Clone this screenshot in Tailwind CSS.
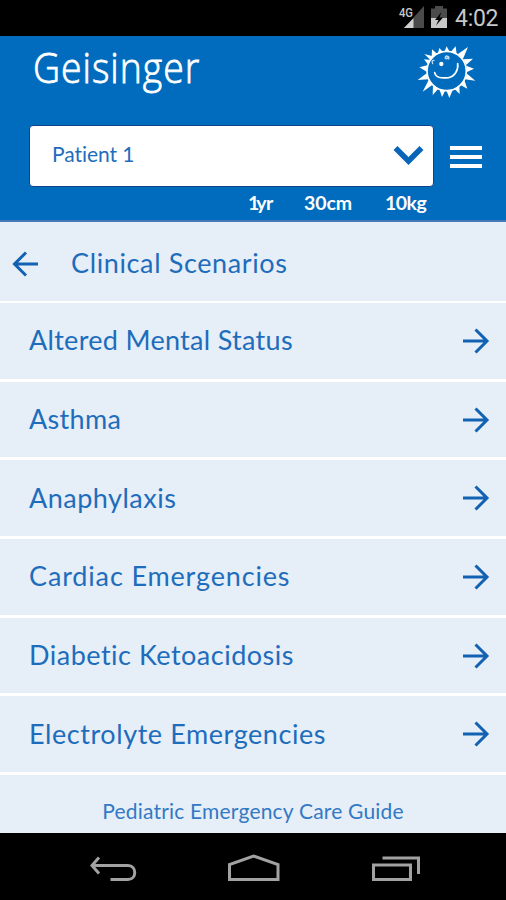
<!DOCTYPE html>
<html lang="en">
<head>
<meta charset="utf-8">
<title>Pediatric Emergency Care Guide</title>
<script src="https://cdn.jsdelivr.net/npm/@tailwindcss/browser@4"></script>
</head>
<body class="w-[506px] h-[900px] overflow-hidden bg-black font-['Lato','Open_Sans',sans-serif] text-[#1e6dbc]">
<div class="flex flex-col h-[900px]">
  <div class="h-9 shrink-0 bg-black flex items-start justify-end pr-2">
    <svg class="w-[52px] h-9 shrink-0" viewBox="398 0 52 36">
      <path d="M424 6V28H404L413.500 18.500V17.500Z" fill="#4b4b4b"/>
      <path d="M404 28L413.500 18V28Z" fill="#d0d0d0"/>
      <text x="399" y="17" font-family="Roboto, sans-serif" font-size="12.5" font-weight="500" textLength="14" lengthAdjust="spacingAndGlyphs" fill="#c8c8c8">4G</text>
      <path d="M431 8.500H435V6H443V8.500H447V28H431Z" fill="#4b4b4b"/>
      <path d="M431 18H447V28H431Z" fill="#c8c8c8"/>
      <path d="M441.500 12L435 20H438.500L436 25.500L443 17.500H439.500Z" fill="#000"/>
    </svg>
    <span class="w-12 pl-[5px] pt-[2px] whitespace-nowrap font-['Roboto',sans-serif] text-[23px] leading-[34px] text-[#c8c8c8] tracking-[-0.3px]">4:02</span>
  </div>

  <header class="h-[186px] shrink-0 bg-[#016cbd] border-b-2 border-[#4579b9]">
    <div class="h-[89px] flex justify-between pl-[33px] pr-[6px]">
      <h1 class="pt-[3px] w-[170px] whitespace-nowrap origin-left scale-x-[0.89] font-['Open_Sans',sans-serif] font-light text-[42px] leading-[56px] tracking-[1.1px] text-white [-webkit-text-stroke:0.8px_white]">Geisinger</h1>
      <svg class="w-[100px] h-[70px]" viewBox="0 0 300 210" fill="none" stroke="#fff" stroke-linecap="round">
        <circle cx="140" cy="105" r="59" stroke-width="5"/>
        <g fill="#fff" stroke="none">
          <path d="M95 64L96 40L112 54Z"/><path d="M114 52L118 36L130 49Z"/><path d="M133 48L140 31L149 48Z"/><path d="M152 48L167 31L170 54Z"/><path d="M173 55L204 33L189 68Z"/><path d="M190 70L219 68L199 86Z"/><path d="M199 89L222 98L201 108Z"/><path d="M201 113L226 134L195 130Z"/><path d="M193 132L202 158L180 146Z"/><path d="M178 148L179 174L163 158Z"/><path d="M159 160L148 186L139 163Z"/><path d="M136 163L126 183L118 159Z"/><path d="M115 158L98 177L99 148Z"/><path d="M97 147L68 167L86 132Z"/><path d="M84 130L53 132L80 112Z"/><path d="M80 107L58 94L82 88Z"/><path d="M83 84L72 70L92 72Z"/><path d="M92 73L73 54L99 61Z"/>
          <circle cx="124" cy="84" r="6.500"/>
        </g>
        <path d="M104 110C108 127 126 127 146 125C164 122 176 101 173 83" stroke-width="5"/>
        <path d="M102 73Q94 72 98 83" stroke-width="4" stroke="#b9dcf5"/>
        <path d="M136 66Q137 59 142 61Q148 62 146 68M139 68L142 67" stroke-width="5" stroke="#b9dcf5"/>
      </svg>
    </div>
    <div class="h-[61px] flex items-center pl-[29px]">
      <div class="w-[405px] h-[62px] shrink-0 flex items-center justify-between rounded-[4px] border border-[#0b4585] bg-white pl-[22px] pr-[9px]">
        <span class="text-[21px] leading-6 pb-[4px] tracking-[-0.05px]">Patient 1</span>
        <svg class="w-[31px] h-[22px]" viewBox="0 0 31 22" fill="none" stroke="#0865b8" stroke-width="5.500"><path d="M2.500 3L15.500 16L28.500 3"/></svg>
      </div>
      <div class="ml-4 mt-[2px] w-8 flex flex-col gap-[5px]">
        <i class="h-1 bg-white"></i><i class="h-1 bg-white"></i><i class="h-1 bg-white"></i>
      </div>
    </div>
    <div class="flex pl-[248px] pt-[5px] text-[19.500px] leading-6 font-bold text-white whitespace-nowrap">
      <span class="w-[56px]"><span class="tracking-[-3px]">1</span><span class="tracking-[-0.7px]">yr</span></span><span class="w-[81px] tracking-[-0.1px]">30cm</span><span class="tracking-[-0.5px]">10kg</span>
    </div>
  </header>

  <main class="h-[611px] shrink-0 bg-[#e6eef8] text-[27px] leading-8 whitespace-nowrap">
    <div class="h-[81px] border-b-2 border-white flex items-center pl-3 pt-[4px]">
      <svg class="w-[27px] h-[26px]" viewBox="0 0 27 26" fill="none" stroke="#1262b4" stroke-width="3"><path d="M26 13H3M14 1.500L2.500 13L14 24.500"/></svg>
      <h2 class="ml-8 pb-[2px] font-normal tracking-[0.63px]">Clinical Scenarios</h2>
    </div>
    <ul class="[&>li]:h-[78.700px] [&>li]:border-b-3 [&>li]:border-white [&>li]:flex [&>li]:items-center [&>li]:justify-between [&>li]:pl-[29px] [&>li]:pr-4 [&_span]:pb-[1px] [&_svg]:w-[27px] [&_svg]:h-[26px]">
      <li><span class="tracking-[0.3px]">Altered Mental Status</span><svg viewBox="0 0 27 26" fill="none" stroke="#1262b4" stroke-width="3"><path d="M0 13H24M12.500 1.500L24 13L12.500 24.500"/></svg></li>
      <li><span class="tracking-[0.3px]">Asthma</span><svg viewBox="0 0 27 26" fill="none" stroke="#1262b4" stroke-width="3"><path d="M0 13H24M12.500 1.500L24 13L12.500 24.500"/></svg></li>
      <li><span class="tracking-[0.5px]">Anaphylaxis</span><svg viewBox="0 0 27 26" fill="none" stroke="#1262b4" stroke-width="3"><path d="M0 13H24M12.500 1.500L24 13L12.500 24.500"/></svg></li>
      <li><span class="tracking-[0.85px]">Cardiac Emergencies</span><svg viewBox="0 0 27 26" fill="none" stroke="#1262b4" stroke-width="3"><path d="M0 13H24M12.500 1.500L24 13L12.500 24.500"/></svg></li>
      <li><span class="tracking-[0.5px]">Diabetic Ketoacidosis</span><svg viewBox="0 0 27 26" fill="none" stroke="#1262b4" stroke-width="3"><path d="M0 13H24M12.500 1.500L24 13L12.500 24.500"/></svg></li>
      <li><span class="tracking-[0.57px]">Electrolyte Emergencies</span><svg viewBox="0 0 27 26" fill="none" stroke="#1262b4" stroke-width="3"><path d="M0 13H24M12.500 1.500L24 13L12.500 24.500"/></svg></li>
    </ul>
    <p class="pt-[24px] text-center text-[21px] leading-6 tracking-[0.2px] text-[#3379c4]">Pediatric Emergency Care Guide</p>
  </main>

  <nav class="h-[67px] shrink-0 bg-black">
    <svg class="w-[506px] h-[67px]" viewBox="0 833 506 67" fill="none" stroke="#a2a2a2" stroke-width="3">
      <path d="M99 857.500L92 865.500L99 873.500M92 865.500H128C137 865.500 137 879.500 128 879.500H110.500"/>
      <path d="M229.500 879.500V864.500L253.500 856L278 864.500V879.500Z"/>
      <path d="M373.500 865H410.500V879.500H373.500ZM382.500 858H418.500V874"/>
    </svg>
  </nav>
</div>
</body>
</html>
